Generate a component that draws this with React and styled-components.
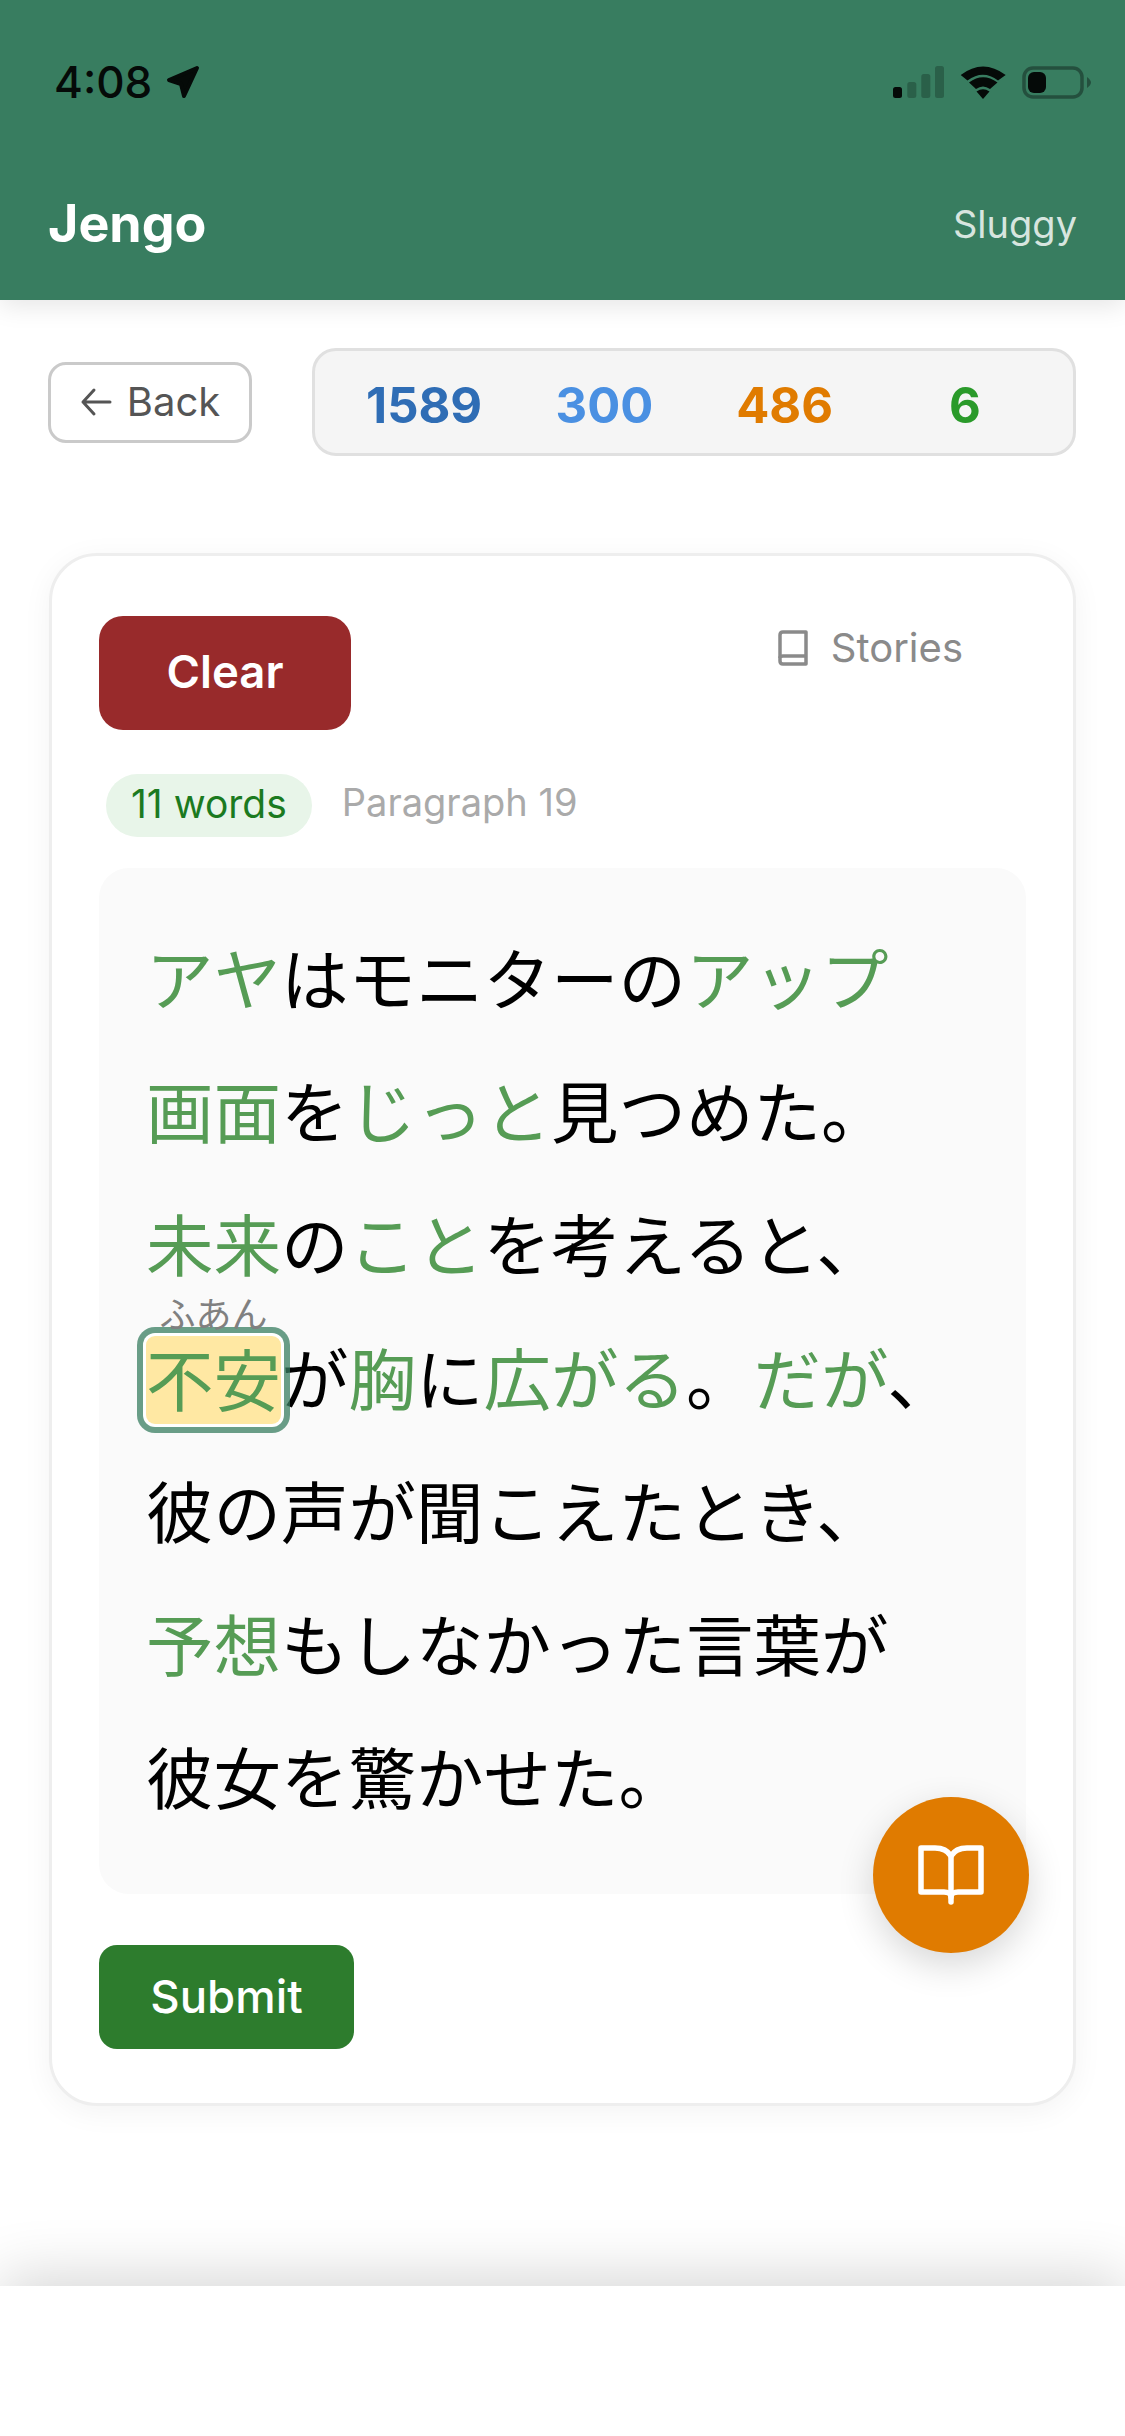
import React from "react";
import styled, { createGlobalStyle } from "styled-components";

const Global = createGlobalStyle`
  html, body { margin: 0; padding: 0; background: #fff; }
  body { font-family: Inter, "Noto Sans CJK JP", sans-serif; }
  * { box-sizing: border-box; }
`;

const Page = styled.div`
  width: 1125px;
  height: 2436px;
  display: flex;
  flex-direction: column;
  overflow: hidden;
  background: #fff;
`;

const Header = styled.header`
  height: 300px;
  flex: none;
  background: #387d60;
  padding: 0 48px;
  display: flex;
  flex-direction: column;
  box-shadow: 0 6px 24px rgba(0, 0, 0, 0.1);
  position: relative;
  z-index: 1;
`;

const StatusBar = styled.div`
  height: 66px;
  margin: 49px -14px 0 6px;
  display: flex;
  align-items: center;
  justify-content: space-between;
`;

const Clock = styled.div`
  display: flex;
  align-items: center;
  gap: 14px;
  font: 500 44px/1 Inter, sans-serif;
  color: #050a08;
`;

const StatusIcons = styled.div`
  display: flex;
  align-items: center;
  gap: 16px;
`;

const BrandRow = styled.div`
  margin-top: 83px;
  display: flex;
  align-items: center;
  justify-content: space-between;
`;

const Brand = styled.div`
  font: 700 52px/1 Inter, sans-serif;
  color: #fff;
`;

const UserName = styled.div`
  font: 400 38px/1 Inter, sans-serif;
  color: #d7e5df;
`;

const Main = styled.main`
  flex: 1;
  padding: 48px 49px 0 48px;
  display: flex;
  flex-direction: column;
`;

const TopRow = styled.div`
  display: flex;
  align-items: center;
  gap: 60px;
`;

const BackButton = styled.button`
  width: 204px;
  height: 81px;
  flex: none;
  border: 3px solid #cacaca;
  border-radius: 18px;
  background: #fff;
  color: #555;
  font: 400 40px/1 Inter, sans-serif;
  display: flex;
  align-items: center;
  justify-content: center;
  gap: 15px;
  padding: 0;
`;

const Stats = styled.div`
  flex: 1;
  height: 108px;
  border: 3px solid #e0e0e0;
  border-radius: 24px;
  background: #f5f5f5;
  display: grid;
  grid-template-columns: repeat(4, 1fr);
  padding: 6px 18px 0 19px;
  align-items: center;
`;

const Stat = styled.div`
  text-align: center;
  font: 700 49px/1 Inter, sans-serif;
  color: ${(p) => p.$color};
`;

const Card = styled.section`
  position: relative;
  margin-top: 97px;
  margin-left: 1px;
  height: 1553px;
  border: 3px solid #eeeeee;
  border-radius: 48px;
  background: #fff;
  padding: 60px 47px 0;
  box-shadow: 0 6px 30px rgba(0, 0, 0, 0.05);
  display: flex;
  flex-direction: column;
`;

const CardTop = styled.div`
  display: flex;
  align-items: flex-start;
  justify-content: space-between;
`;

const ClearButton = styled.button`
  width: 252px;
  height: 114px;
  border: 0;
  border-radius: 24px;
  background: #982a2b;
  color: #fff;
  font: 600 45.5px/1 Inter, sans-serif;
  padding: 0 0 3px;
`;

const StoriesLink = styled.div`
  display: flex;
  align-items: center;
  gap: 23px;
  margin: 8px 63px 0 0;
  color: #8a8a8a;
  font: 400 40px/48px Inter, sans-serif;
`;

const MetaRow = styled.div`
  display: flex;
  align-items: center;
  gap: 30px;
  margin: 44px 0 0 7px;
`;

const WordPill = styled.div`
  height: 63px;
  padding: 0 25px 5px;
  display: flex;
  align-items: center;
  border-radius: 32px;
  background: #e8f5e9;
  color: #1b7a1f;
  font: 400 39px/1 Inter, sans-serif;
`;

const ParagraphLabel = styled.div`
  color: #aaaaaa;
  font: 400 38px/1 Inter, sans-serif;
  padding-bottom: 7px;
`;

const ReadingPanel = styled.div`
  margin-top: 31px;
  height: 1026px;
  border-radius: 30px;
  background: #fafafa;
  padding: 41px 47px 0;
`;

const Line = styled.div`
  height: 133.2px;
  font: 400 67.5px/133px "Noto Sans CJK JP", sans-serif;
  color: #000;
  white-space: nowrap;
`;

const Known = styled.span`
  color: #569c55;
`;

const Selected = styled.span`
  position: relative;
  display: inline-block;
  color: #569c55;
  background: #ffe8a3;
  border-radius: 9px;
  box-shadow: 0 0 0 3px #fff, 0 0 0 9px rgba(56, 125, 96, 0.75);
  height: 88px;
  line-height: 82px;
  vertical-align: -1px;
  z-index: 0;
`;

const Reading = styled.span`
  position: absolute;
  left: 0;
  right: 0;
  bottom: 94px;
  text-align: center;
  font: 400 36px/1 "Noto Sans CJK JP", sans-serif;
  color: #808080;
`;

const SubmitButton = styled.button`
  width: 255px;
  height: 104px;
  margin-top: 51px;
  border: 0;
  border-radius: 18px;
  background: #2d7c2d;
  color: #fff;
  font: 500 45.5px/1 Inter, sans-serif;
  padding: 0;
`;

const Fab = styled.button`
  position: absolute;
  left: 821px;
  top: 1241px;
  width: 156px;
  height: 156px;
  border: 0;
  border-radius: 50%;
  padding: 0;
  background: #e07b00;
  display: flex;
  align-items: center;
  justify-content: center;
  box-shadow: 0 12px 36px rgba(0, 0, 0, 0.16);
`;

const BottomBar = styled.footer`
  height: 150px;
  flex: none;
  background: #fff;
  box-shadow: 0 -10px 60px rgba(0, 0, 0, 0.16);
  position: relative;
`;

const LocationArrow = () => (
  <svg width="34" height="34" viewBox="0 0 34 34">
    <path d="M31 3 L3 15 L15 19 L18 31 Z" fill="#050a08" stroke="#050a08" strokeWidth="4" strokeLinejoin="round" />
  </svg>
);

const Signal = () => (
  <svg width="51" height="33" viewBox="0 0 51 33">
    <rect x="0" y="21" width="9" height="11" rx="2.5" fill="#050a08" />
    <rect x="14.3" y="16" width="9" height="16" rx="2.5" fill="#2a6049" />
    <rect x="28.3" y="8" width="9" height="24" rx="2.5" fill="#2a6049" />
    <rect x="42" y="0" width="9" height="32" rx="2.5" fill="#2a6049" />
  </svg>
);

const Wifi = () => (
  <svg width="46" height="33" viewBox="0 0 46 33" fill="#050a08">
    <path d="M0.7 9 Q23 -8 45.7 9 L38 14.5 Q23 3 7.5 14.5 Z" />
    <path d="M9 16.5 Q23 6 37.5 16.5 L30 23 Q23 18 16 23 Z" />
    <path d="M16.5 25.5 Q23 21 29.5 25.5 L23 33 Z" />
  </svg>
);

const Battery = () => (
  <svg width="69" height="33" viewBox="0 0 69 33">
    <rect x="2" y="2" width="58" height="29" rx="9" fill="none" stroke="#24503e" strokeWidth="3.5" />
    <rect x="6" y="6" width="18" height="21" rx="6" fill="#050a08" />
    <path d="M65 11 Q69 14 69 16.5 Q69 19 65 22 Z" fill="#24503e" />
  </svg>
);

const ArrowLeft = () => (
  <svg width="32" height="32" viewBox="0 0 32 32" fill="none" stroke="#555" strokeWidth="3" strokeLinecap="round" strokeLinejoin="round">
    <path d="M30 16 H3 M14 4 L3 16 L14 28" />
  </svg>
);

const SmallBook = () => (
  <svg width="30" height="36" viewBox="0 0 30 36" fill="none" stroke="#8a8a8a" strokeWidth="3.5" strokeLinejoin="round">
    <path d="M5 2 H28 V34 H5 Q2 34 2 31 V5 Q2 2 5 2 Z" />
    <path d="M2 28 Q2 26 5 26 H28" />
  </svg>
);

const OpenBook = () => (
  <svg width="66" height="60" viewBox="0 0 66 60" fill="none" stroke="#fff" strokeWidth="5.5" strokeLinejoin="round" strokeLinecap="round">
    <path d="M33 11 C30 6 24 3 17 3 H3 V47 H26 C30 47 33 49 33 52 C33 49 36 47 40 47 H63 V3 H49 C42 3 36 6 33 11 Z" />
    <path d="M33 11 V57" />
  </svg>
);

export default function App() {
  return (
    <Page>
      <Global />
      <Header>
        <StatusBar>
          <Clock>4:08 <LocationArrow /></Clock>
          <StatusIcons>
            <Signal />
            <Wifi />
            <Battery />
          </StatusIcons>
        </StatusBar>
        <BrandRow>
          <Brand>Jengo</Brand>
          <UserName>Sluggy</UserName>
        </BrandRow>
      </Header>
      <Main>
        <TopRow>
          <BackButton><ArrowLeft />Back</BackButton>
          <Stats>
            <Stat $color="#2f6db5">1589</Stat>
            <Stat $color="#4a90e2">300</Stat>
            <Stat $color="#e07b00">486</Stat>
            <Stat $color="#2a9a2a">6</Stat>
          </Stats>
        </TopRow>
        <Card>
          <CardTop>
            <ClearButton>Clear</ClearButton>
            <StoriesLink><SmallBook />Stories</StoriesLink>
          </CardTop>
          <MetaRow>
            <WordPill>11 words</WordPill>
            <ParagraphLabel>Paragraph 19</ParagraphLabel>
          </MetaRow>
          <ReadingPanel>
            <Line><Known>アヤ</Known>はモニターの<Known>アップ</Known></Line>
            <Line><Known>画面</Known>を<Known>じっと</Known>見つめた。</Line>
            <Line><Known>未来</Known>の<Known>こと</Known>を考えると、</Line>
            <Line><Selected>不安<Reading>ふあん</Reading></Selected>が<Known>胸</Known>に<Known>広がる</Known>。<Known>だが</Known>、</Line>
            <Line>彼の声が聞こえたとき、</Line>
            <Line><Known>予想</Known>もしなかった言葉が</Line>
            <Line>彼女を驚かせた。</Line>
          </ReadingPanel>
          <SubmitButton>Submit</SubmitButton>
          <Fab aria-label="Open book"><OpenBook /></Fab>
        </Card>
      </Main>
      <BottomBar />
    </Page>
  );
}
